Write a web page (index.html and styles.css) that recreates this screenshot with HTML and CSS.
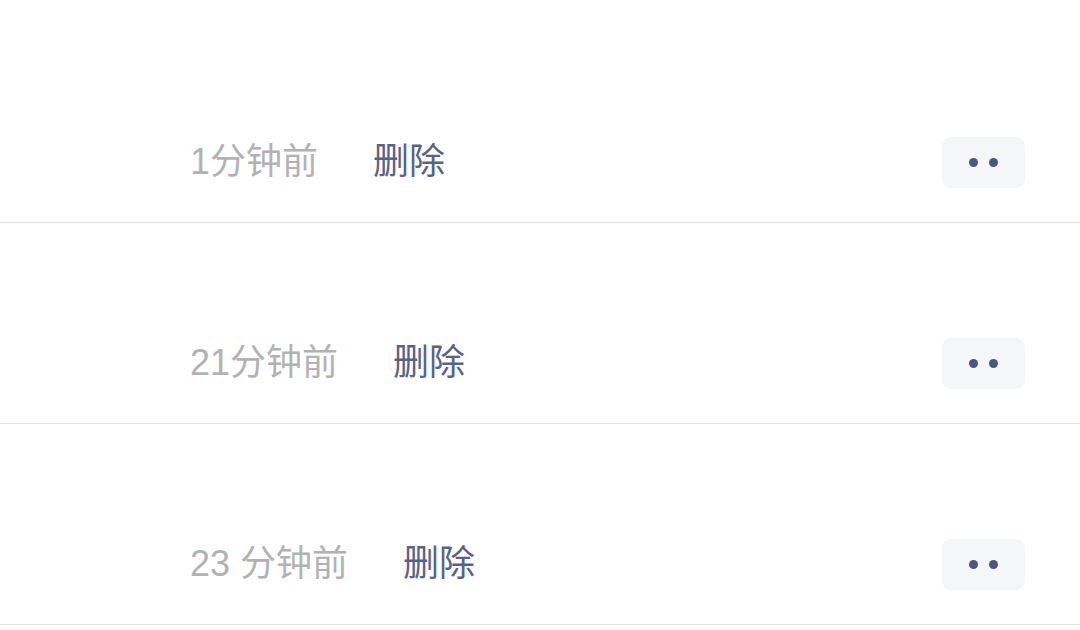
FILE: index.html
```html
<!DOCTYPE html>
<html lang="zh">
<head>
<meta charset="utf-8">
<link rel="stylesheet" href="styles.css">
</head>
<body>
<div class="list">
  <div class="row">
    <div class="meta">
      <span class="time">1分钟前</span>
      <span class="del">删除</span>
    </div>
    <div class="more"><span class="dot"></span><span class="dot"></span></div>
  </div>
  <div class="row">
    <div class="meta">
      <span class="time">21分钟前</span>
      <span class="del">删除</span>
    </div>
    <div class="more"><span class="dot"></span><span class="dot"></span></div>
  </div>
  <div class="row">
    <div class="meta">
      <span class="time">23 分钟前</span>
      <span class="del">删除</span>
    </div>
    <div class="more"><span class="dot"></span><span class="dot"></span></div>
  </div>
</div>
</body>
</html>
```

FILE: styles.css
```css
html, body {
  margin: 0;
  padding: 0;
  background: #ffffff;
}
body {
  font-family: "Liberation Sans", "Noto Sans CJK SC", sans-serif;
  width: 1080px;
  height: 630px;
  overflow: hidden;
}
.list {
  padding-top: 22px;
}
.row {
  border-bottom: 1px solid #e3e3e3;
  display: flex;
  align-items: flex-end;
  justify-content: space-between;
  padding: 0 55px 34px 190px;
  box-sizing: border-box;
  height: 201px;
}
.meta {
  display: flex;
  align-items: center;
  height: 51px;
  gap: 55px;
  font-size: 36px;
  line-height: 1;
  padding-bottom: 1px;
  box-sizing: border-box;
}
.time {
  color: #b2b2b2;
}
.del {
  color: #56628a;
}
.more {
  width: 83px;
  height: 51px;
  border-radius: 9px;
  background: #f5f6f8;
  display: flex;
  align-items: center;
  justify-content: center;
  gap: 11px;
}
.dot {
  width: 9px;
  height: 9px;
  border-radius: 50%;
  background: #4b5781;
}
```
